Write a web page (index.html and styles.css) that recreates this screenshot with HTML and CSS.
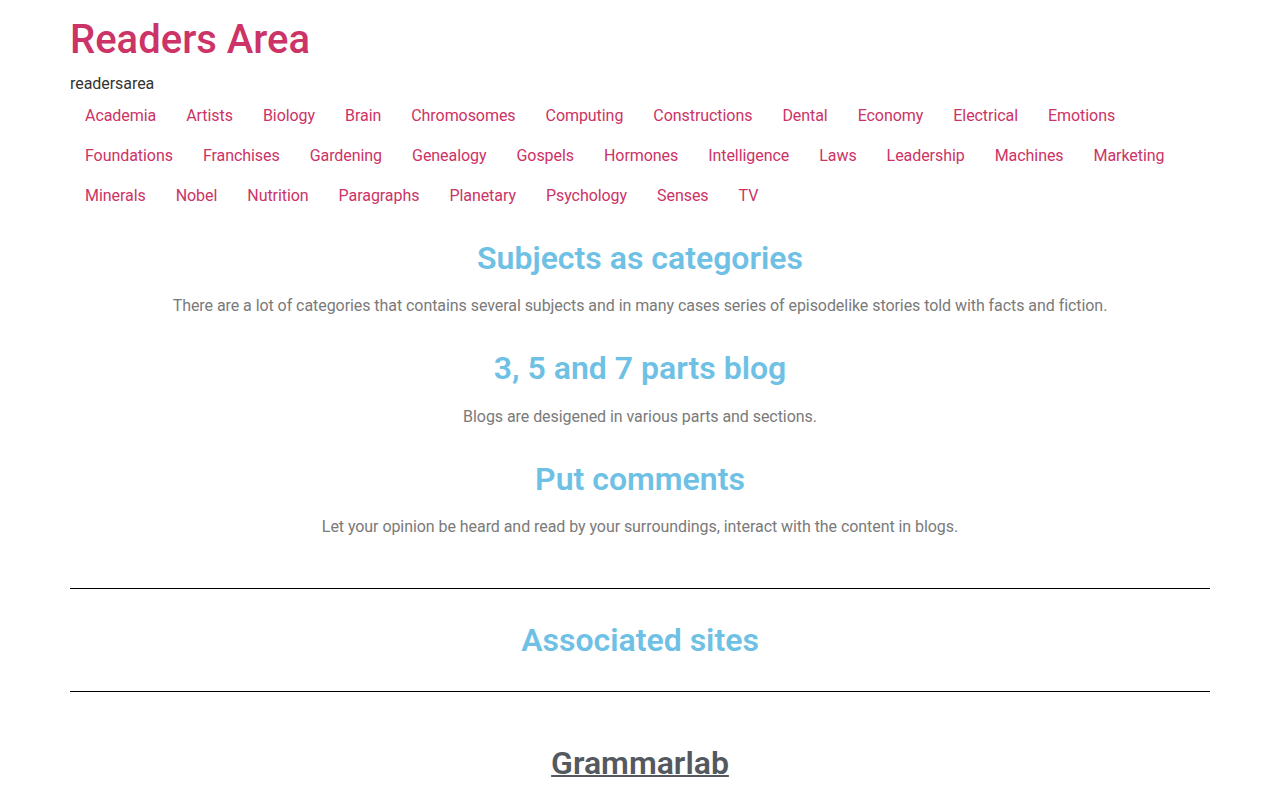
FILE: index.html
```html
<!DOCTYPE html>
<html lang="en">
<head>
<meta charset="utf-8">
<title>Readers Area</title>
<link rel="stylesheet" href="styles.css">
</head>
<body>
<header class="site-header">
  <div class="container">
    <h1 class="site-title"><a href="#">Readers Area</a></h1>
    <p class="site-desc">readersarea</p>
    <nav class="menu">
      <a href="#">Academia</a><a href="#">Artists</a><a href="#">Biology</a><a href="#">Brain</a><a href="#">Chromosomes</a><a href="#">Computing</a><a href="#">Constructions</a><a href="#">Dental</a><a href="#">Economy</a><a href="#">Electrical</a><a href="#">Emotions</a><a href="#">Foundations</a><a href="#">Franchises</a><a href="#">Gardening</a><a href="#">Genealogy</a><a href="#">Gospels</a><a href="#">Hormones</a><a href="#">Intelligence</a><a href="#">Laws</a><a href="#">Leadership</a><a href="#">Machines</a><a href="#">Marketing</a><a href="#">Minerals</a><a href="#">Nobel</a><a href="#">Nutrition</a><a href="#">Paragraphs</a><a href="#">Planetary</a><a href="#">Psychology</a><a href="#">Senses</a><a href="#">TV</a>
    </nav>
  </div>
</header>
<main class="container content">
  <section class="block">
    <h2 class="heading">Subjects as categories</h2>
    <p class="text">There are a lot of categories that contains several subjects and in many cases series of episodelike stories told with facts and fiction.</p>
  </section>
  <section class="block">
    <h2 class="heading">3, 5 and 7 parts blog</h2>
    <p class="text">Blogs are desigened in various parts and sections.</p>
  </section>
  <section class="block">
    <h2 class="heading">Put comments</h2>
    <p class="text">Let your opinion be heard and read by your surroundings, interact with the content in blogs.</p>
  </section>
  <hr class="rule rule-top">
  <h2 class="heading assoc">Associated sites</h2>
  <hr class="rule">
  <h2 class="site-link"><a href="#">Grammarlab</a></h2>
</main>
</body>
</html>
```
FILE: styles.css
```css
* { box-sizing: border-box; }
html, body {
  margin: 0;
  padding: 0;
  background: #fff;
  font-family: Roboto, "Liberation Sans", sans-serif;
  color: #333;
  font-size: 16px;
  line-height: 1.5;
}
.container {
  width: 1140px;
  margin: 0 auto;
}
.site-header {
  padding-top: 16px;
}
.site-title {
  margin: 0 0 8px;
  font-size: 40px;
  font-weight: 500;
  line-height: 1.2;
}
.site-title a {
  color: #cc3366;
  text-decoration: none;
}
.site-desc {
  margin: 0;
  font-size: 16px;
  color: #333;
  letter-spacing: -0.05px;
}
.menu {
  display: flex;
  flex-wrap: wrap;
}
.menu a {
  display: block;
  padding: 0 15px;
  line-height: 40px;
  color: #cc3366;
  text-decoration: none;
  font-size: 16px;
  letter-spacing: -0.06px;
}
.content {
  padding-top: 23px;
  text-align: center;
}
.block {
  margin-bottom: 31px;
}
.heading {
  margin: 0;
  font-size: 32px;
  font-weight: 600;
  line-height: 1.2;
  color: #6ec1e4;
}
.text {
  margin: 17px 0 0;
  color: #7a7a7a;
  font-size: 16px;
  line-height: 24px;
  letter-spacing: -0.06px;
}
.rule {
  border: 0;
  border-top: 1px solid #000;
  margin: 0;
}
.rule-top {
  margin-top: 49px;
}
.assoc {
  padding: 32px 0 31px;
}
.site-link {
  margin: 52px 0 0;
  font-size: 32px;
  font-weight: 600;
  line-height: 1.2;
}
.site-link a {
  color: #54595f;
  text-decoration: underline;
  text-decoration-thickness: 2px;
}
```
